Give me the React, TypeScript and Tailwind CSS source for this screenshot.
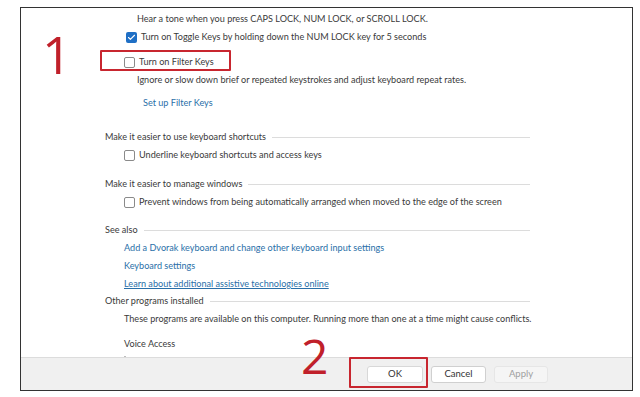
import { Check } from "lucide-react";

const font = { fontFamily: 'Lato, "Open Sans", sans-serif' };

function Box({ checked = false }: { checked?: boolean }) {
  return checked ? (
    <span className="flex h-[11px] w-[11px] shrink-0 items-center justify-center rounded-[2px] bg-[#1f6fc5]">
      <Check size={9} strokeWidth={3} className="text-white" />
    </span>
  ) : (
    <span className="h-[11px] w-[11px] shrink-0 rounded-[2px] border border-[#8a8a8a] bg-white" />
  );
}

function Heading({ title, className = "" }: { title: string; className?: string }) {
  return (
    <div className={`flex h-[18px] w-[425px] items-center ${className}`}>
      <span className="whitespace-nowrap">{title}</span>
      <span className="ml-[6px] h-px flex-1 bg-[#dcdcdc]" />
    </div>
  );
}

function Option({ label, className = "", checked = false }: { label: string; className?: string; checked?: boolean }) {
  return (
    <div className={`flex h-[18px] items-center gap-[4px] whitespace-nowrap ${className}`}>
      <Box checked={checked} />
      <span>{label}</span>
    </div>
  );
}

export default function App() {
  return (
    <div className="relative h-[397px] w-[640px] overflow-hidden bg-white" style={font}>
      <div className="ml-[20px] mt-[7px] flex h-[384px] w-[613px] flex-col overflow-hidden border-[1.5px] border-[#333]">
        <div className="flex-1 overflow-hidden pl-[84px] text-[9.1px] text-[#3a3a3a]">
          <div className="ml-[32px] mt-[2px] flex h-[18px] items-center whitespace-nowrap">
            Hear a tone when you press CAPS LOCK, NUM LOCK, or SCROLL LOCK.
          </div>
          <Option checked className="ml-[21px]" label="Turn on Toggle Keys by holding down the NUM LOCK key for 5 seconds" />
          <Option className="ml-[19px] mt-[7px]" label="Turn on Filter Keys" />
          <div className="ml-[32px] flex h-[18px] items-center whitespace-nowrap">
            Ignore or slow down brief or repeated keystrokes and adjust keyboard repeat rates.
          </div>
          <div className="ml-[38px] mt-[5px] flex h-[18px] items-center text-[#2a6fa8]">Set up Filter Keys</div>

          <Heading className="mt-[16px]" title="Make it easier to use keyboard shortcuts" />
          <Option className="ml-[19px]" label="Underline keyboard shortcuts and access keys" />

          <Heading className="mt-[11px]" title="Make it easier to manage windows" />
          <Option className="ml-[19px]" label="Prevent windows from being automatically arranged when moved to the edge of the screen" />

          <Heading className="mt-[10px]" title="See also" />
          <div className="ml-[19px] flex flex-col text-[#2a6fa8]">
            <span className="flex h-[18px] items-center">Add a Dvorak keyboard and change other keyboard input settings</span>
            <span className="flex h-[18px] items-center">Keyboard settings</span>
            <span className="flex h-[17px] items-center underline">Learn about additional assistive technologies online</span>
          </div>

          <Heading title="Other programs installed" />
          <div className="ml-[19px] flex h-[18px] items-center whitespace-nowrap">
            These programs are available on this computer. Running more than one at a time might cause conflicts.
          </div>
          <div className="ml-[19px] mt-[7px] flex h-[18px] items-center">Voice Access</div>
          <div className="ml-[19px] mt-[3px]">
            <Box />
          </div>
        </div>

        <div className="flex h-[33px] shrink-0 items-center gap-[8px] border-t border-[#dcdcdc] bg-[#f0f0f0] pl-[346px] text-[9.5px]">
          <button className="h-[17px] w-[56px] rounded-[3px] border border-[#d8d8d8] bg-white text-[#333]">OK</button>
          <button className="h-[17px] w-[55px] rounded-[3px] border border-[#d0d0d0] bg-white text-[#333]">Cancel</button>
          <button className="h-[17px] w-[54px] rounded-[3px] border border-[#e6e6e6] bg-[#f5f5f5] text-[#a0a0a0]">Apply</button>
        </div>
      </div>

      <span className="absolute left-[42px] top-[35px] flex h-[38px] items-center text-[52px] leading-[38px] text-[#c0202a]" style={{ fontFamily: '"Open Sans", sans-serif' }}>1</span>
      <span className="absolute left-[301px] top-[338px] flex h-[35px] items-center text-[48px] leading-[35px] text-[#c0202a]" style={{ fontFamily: '"Open Sans", sans-serif' }}>2</span>
      <div className="absolute left-[100px] top-[50px] h-[21px] w-[131px] rounded-[1px] border-2 border-[#c8262f]" />
      <div className="absolute left-[349px] top-[357px] h-[31px] w-[79px] rounded-[1px] border-2 border-[#c8262f]" />
    </div>
  );
}
